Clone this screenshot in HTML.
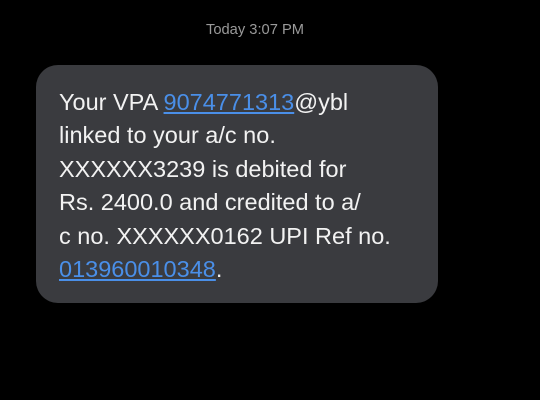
<!DOCTYPE html>
<html><head><style>
html,body{margin:0;padding:0;background:#000;width:540px;height:400px;overflow:hidden;font-family:"Liberation Sans",sans-serif;}
.ts{position:absolute;top:22px;left:0;width:510px;text-align:center;color:#9a9a9a;font-size:14.7px;}
.b{position:absolute;left:36px;top:65px;width:402px;height:238px;background:#3a3b3f;border-radius:22px;}
.t{position:absolute;left:59px;top:86px;color:#f2f2f2;font-size:23.5px;line-height:33.4px;white-space:pre;}
a{color:#4a8fe8;text-decoration:underline;}
</style></head><body>
<div class="ts">Today 3:07 PM</div>
<div class="b"></div>
<div class="t">Your VPA <a>9074771313</a>@ybl
linked to your a/c no.
XXXXXX3239 is debited for
Rs. 2400.0 and credited to a/
c no. XXXXXX0162 UPI Ref no.
<a>013960010348</a>.</div>
</body></html>
